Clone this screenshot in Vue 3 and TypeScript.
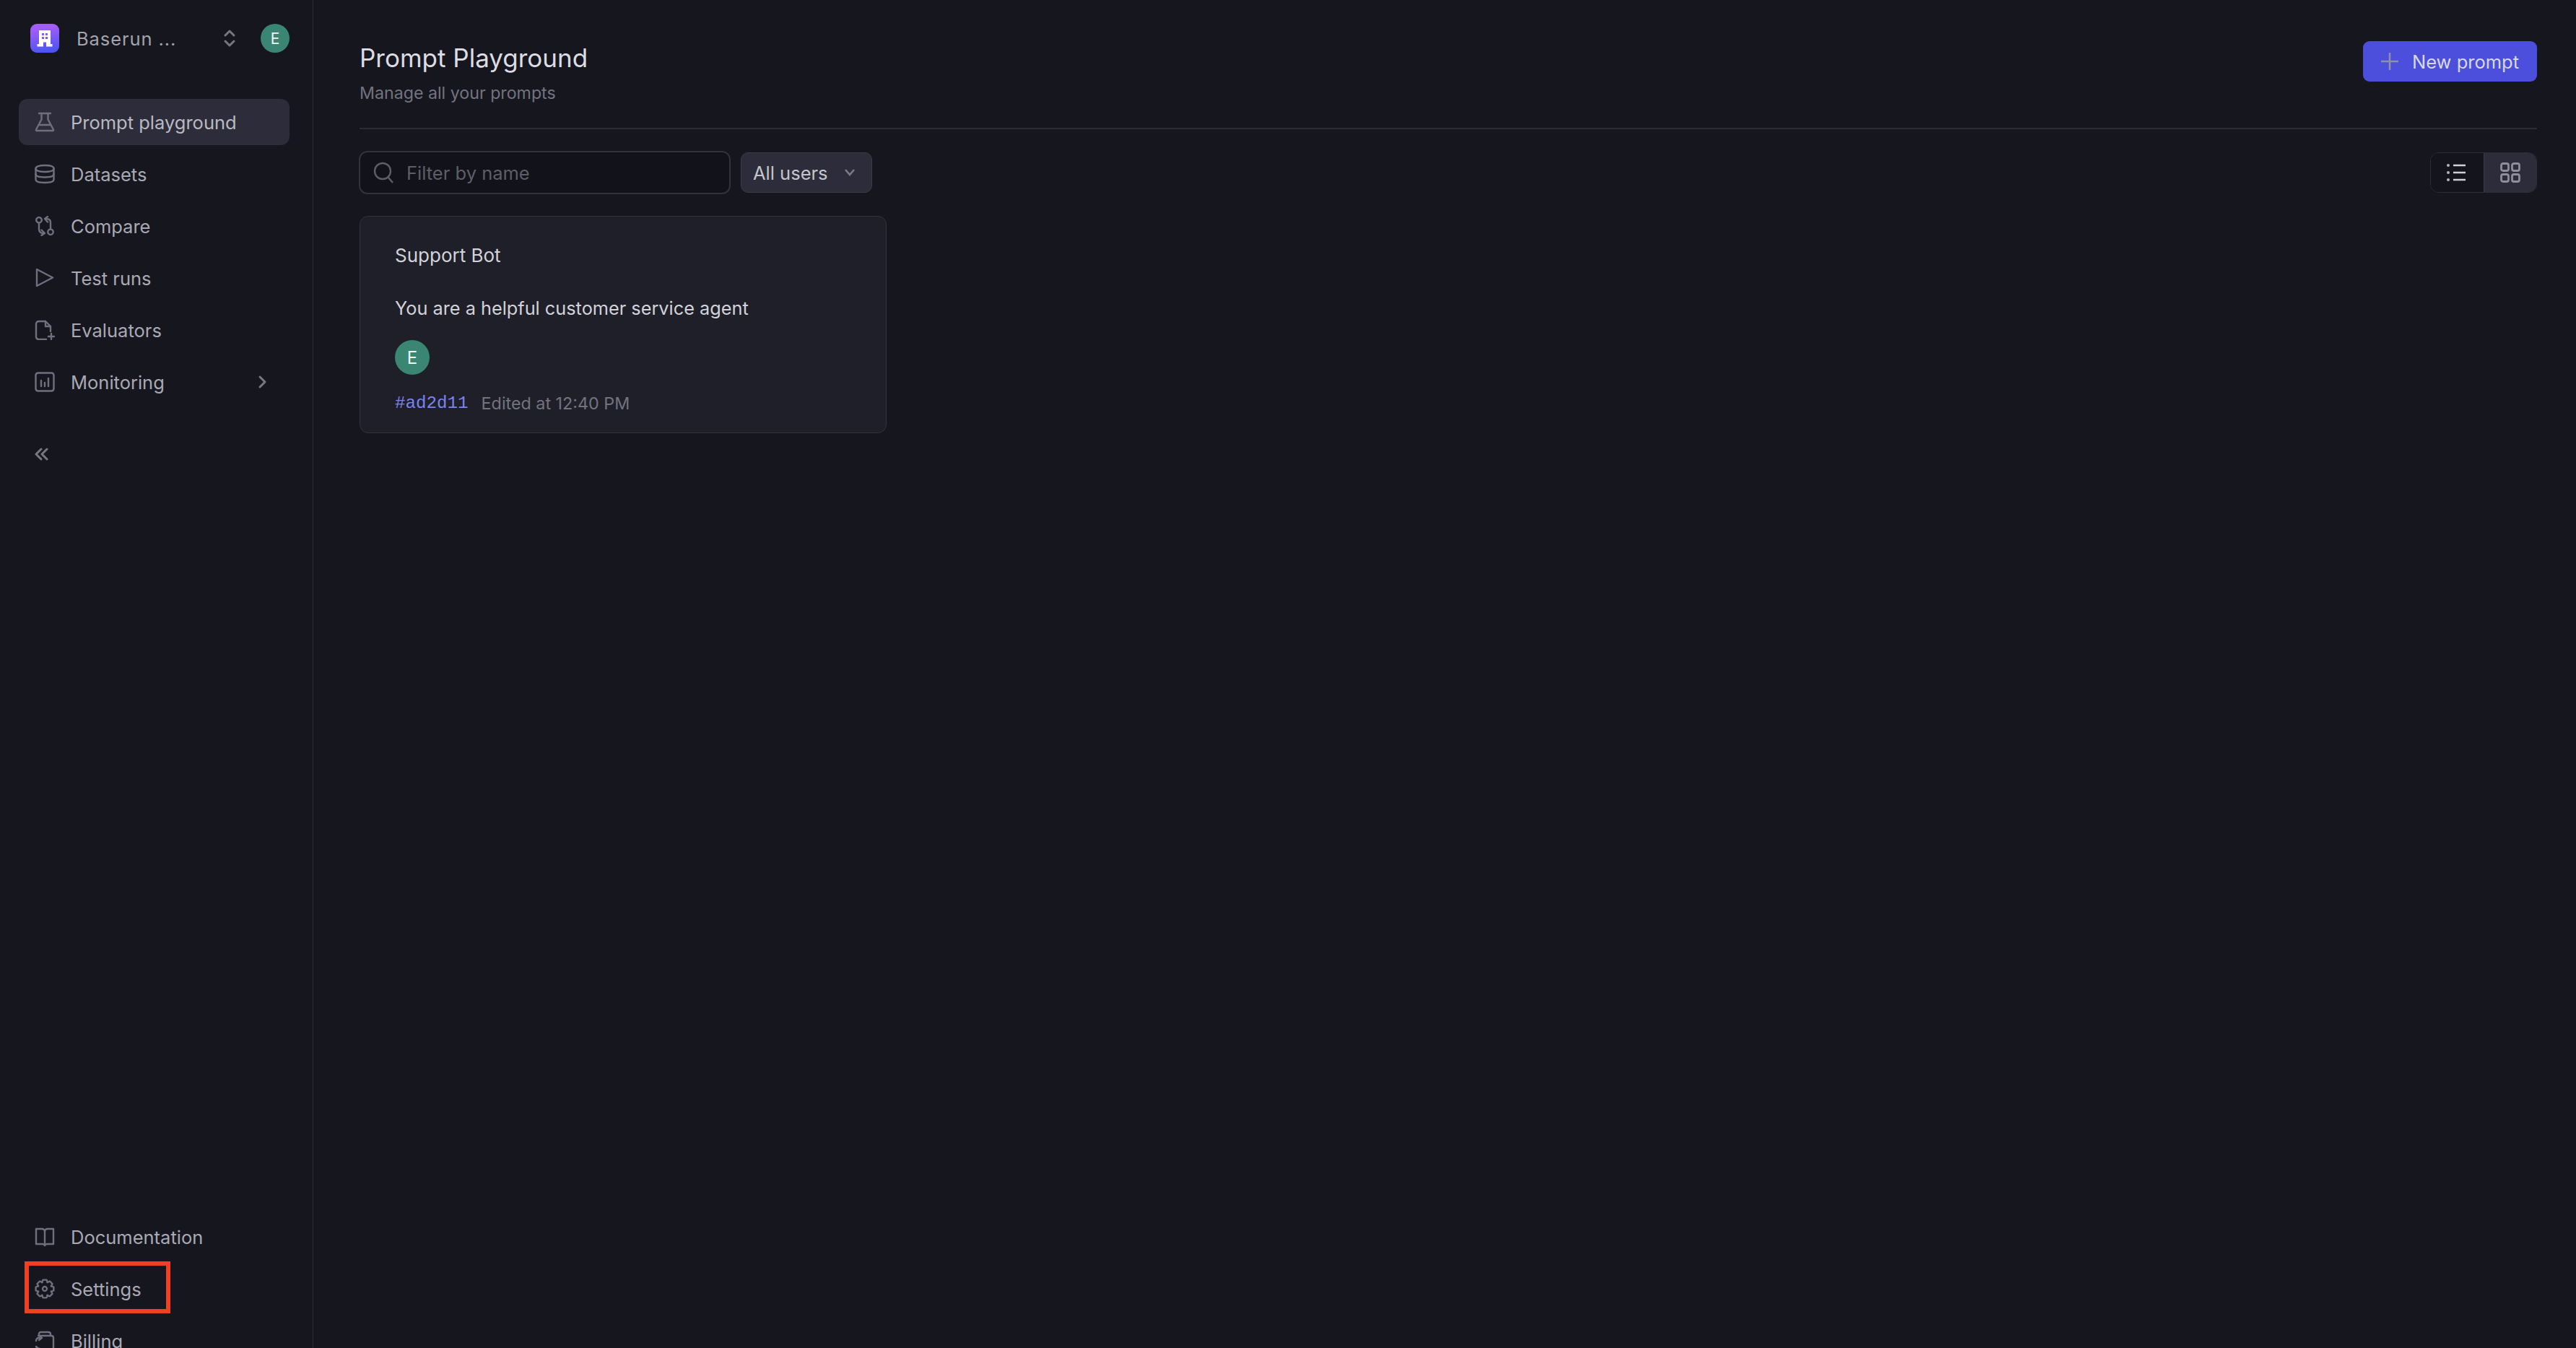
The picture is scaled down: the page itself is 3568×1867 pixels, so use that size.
<script setup lang="ts">
interface NavItem {
  label: string;
  paths: string[];
  active?: boolean;
  chevron?: boolean;
  boxed?: boolean;
}

// 8 tooth gear outline, centred in the 28 box
function gearPath(): string {
  const pts: string[] = [];
  for (let i = 0; i < 8; i++) {
    const a = (i * Math.PI) / 4;
    const corners: [number, number][] = [
      [9.6, -0.42],
      [12.6, -0.2],
      [12.6, 0.2],
      [9.6, 0.42],
    ];
    for (const [r, off] of corners) {
      const x = 14 + r * Math.cos(a + off);
      const y = 14 + r * Math.sin(a + off);
      pts.push(`${x.toFixed(2)} ${y.toFixed(2)}`);
    }
  }
  return `M${pts.join("L")}Z`;
}

const mainNav: NavItem[] = [
  {
    label: "Prompt playground",
    active: true,
    paths: ["M6 2h16", "M9.500 2v8.500L2 24.500q-.5 1.500 1 1.500h22q1.500 0 1-1.500L18.500 10.500V2", "M6.500 18h15"],
  },
  {
    label: "Datasets",
    paths: [
      "M1.500 6.500C1.500 3.500 7 2 14 2s12.500 1.500 12.500 4.500S21 11 14 11 1.500 9.500 1.500 6.500Z",
      "M1.500 6.500v15C1.500 24.500 7 26 14 26s12.500-1.500 12.500-4.500v-15",
      "M1.500 14c0 3 5.500 4.500 12.500 4.500S26.500 17 26.500 14",
    ],
  },
  {
    label: "Compare",
    paths: [
      "M6 2a3.800 3.800 0 1 0 .01 0Z",
      "M22 18.500a3.800 3.800 0 1 0 .01 0Z",
      "M6 9.600V18q0 6 6 6h1",
      "M9.500 19.500 14 24l-4.500 3",
      "M22 18.500V9q0-5-6-5h-1",
      "M18 8.500 14 4l4-3",
    ],
  },
  { label: "Test runs", paths: ["M3 2v23L25 13.500Z"] },
  {
    label: "Evaluators",
    paths: ["M22 16V9l-7-7H6Q2 2 2 6v17q0 4 4 4h10", "M15 2v7h7", "M23 19v8", "M19 23h8"],
  },
  {
    label: "Monitoring",
    chevron: true,
    paths: ["M5 1.500h18q3.500 0 3.500 3.500v18q0 3.500-3.500 3.500H5q-3.500 0-3.500-3.500V5q0-3.500 3.500-3.500Z", "M9 12v8", "M14 15v5", "M19 9v11"],
  },
];

const bottomNav: NavItem[] = [
  {
    label: "Documentation",
    paths: ["M14 7v19", "M14 7q0-4-4-4H2v21h9q2 0 3 2 1-2 3-2h9V3h-8q-4 0-4 4Z"],
  },
  {
    label: "Settings",
    boxed: true,
    paths: ["M14 11a3 3 0 1 0 .01 0Z", gearPath()],
  },
  {
    label: "Billing",
    paths: ["M6 7V5q0-3 3-3h10q3 0 3 3v2", "M5 7h18q3 0 3 3v13q0 3-3 3H8", "M2 14q0-4 4-4h3", "M6 7 10 10 6 13", "M2 22q2 3 5 3"],
  },
];
</script>

<template>
  <div class="page">
    <aside class="sidebar">
      <div class="workspace">
        <span class="logo">
          <svg width="22" height="24" viewBox="0 0 22 24">
            <path
              fill="#fff"
              fill-rule="evenodd"
              d="M3 1h16v19h2.500v3.500H13v-6H9v6H.500V20H3ZM7 5v3h3V5Zm5 0v3h3V5ZM7 10v3h3v-3Zm5 0v3h3v-3Z"
            />
          </svg>
        </span>
        <span class="workspace-name">Baserun ...</span>
        <svg class="updown" width="18" height="26" viewBox="0 0 18 26">
          <path d="M3 9l6-6 6 6M3 17l6 6 6-6" />
        </svg>
        <span class="avatar">E</span>
      </div>

      <nav class="nav">
        <a v-for="item in mainNav" :key="item.label" class="nav-item" :class="{ active: item.active }">
          <svg class="nav-icon" width="28" height="28" viewBox="0 0 28 28">
            <path v-for="d in item.paths" :key="d" :d="d" />
          </svg>
          <span>{{ item.label }}</span>
          <svg v-if="item.chevron" class="chevron" width="14" height="20" viewBox="0 0 14 20">
            <path d="M3 3l7 7-7 7" />
          </svg>
        </a>
      </nav>

      <button class="collapse">
        <svg width="20" height="18" viewBox="0 0 20 18">
          <path d="M9 2 2 9l7 7M17 2l-7 7 7 7" />
        </svg>
      </button>

      <nav class="nav nav-bottom">
        <a v-for="item in bottomNav" :key="item.label" class="nav-item" :class="{ boxed: item.boxed }">
          <svg class="nav-icon" width="28" height="28" viewBox="0 0 28 28">
            <path v-for="d in item.paths" :key="d" :d="d" />
          </svg>
          <span>{{ item.label }}</span>
        </a>
      </nav>
    </aside>

    <main class="main">
      <header class="header">
        <div>
          <h1 class="title">Prompt Playground</h1>
          <p class="subtitle">Manage all your prompts</p>
        </div>
        <button class="new-btn">
          <svg width="26" height="26" viewBox="0 0 26 26">
            <path d="M13 1v24M1 13h24" />
          </svg>
          New prompt
        </button>
      </header>

      <div class="toolbar">
        <label class="search">
          <svg width="30" height="32" viewBox="0 0 30 32">
            <circle cx="13" cy="14" r="11" />
            <path d="M21 23l6 7" />
          </svg>
          <input placeholder="Filter by name" />
        </label>
        <button class="users">
          All users
          <svg width="16" height="12" viewBox="0 0 16 12">
            <path d="M2 2l6 7 6-7" />
          </svg>
        </button>
        <div class="view-toggle">
          <button class="view-btn">
            <svg width="28" height="26" viewBox="0 0 28 26">
              <circle cx="2" cy="3" r="2" />
              <circle cx="2" cy="13" r="2" />
              <circle cx="2" cy="23" r="2" />
              <path d="M9 3h17M9 13h17M9 23h17" />
            </svg>
          </button>
          <button class="view-btn on">
            <svg width="28" height="28" viewBox="0 0 28 28">
              <rect x="1.500" y="1.500" width="10" height="10" rx="2.500" />
              <rect x="16.500" y="1.500" width="10" height="10" rx="2.500" />
              <rect x="1.500" y="16.500" width="10" height="10" rx="2.500" />
              <rect x="16.500" y="16.500" width="10" height="10" rx="2.500" />
            </svg>
          </button>
        </div>
      </div>

      <article class="card">
        <h2 class="card-title">Support Bot</h2>
        <p class="card-text">You are a helpful customer service agent</p>
        <span class="avatar avatar-lg">E</span>
        <div class="card-meta">
          <span class="hash">#ad2d11</span>
          <span>Edited at 12:40 PM</span>
        </div>
      </article>
    </main>
  </div>
</template>

<style>
html,
body {
  margin: 0;
  background: #16161f;
  overflow: hidden;
}
</style>

<style scoped>
.page {
  display: flex;
  height: 1867px;
  overflow: hidden;
  background: #16161f;
  font-family: Inter, "Liberation Sans", sans-serif;
  color: #a9a9b4;
}

.sidebar {
  box-sizing: border-box;
  flex: none;
  width: 434px;
  height: 1889px;
  padding: 33px 32px 0 26px;
  display: flex;
  flex-direction: column;
  border-right: 1px solid #2a2a34;
}

.workspace {
  display: flex;
  align-items: center;
  height: 40px;
  padding-left: 16px;
  font-size: 25.500px;
}

.logo {
  flex: none;
  width: 40px;
  height: 40px;
  border-radius: 9px;
  display: flex;
  align-items: center;
  justify-content: center;
  background: linear-gradient(170deg, #a25cf8 20%, #4c55f2 90%);
}

.workspace-name {
  margin-left: 24px;
  flex: 1;
  letter-spacing: 0.900px;
  color: #a3a3ad;
}

.updown {
  margin-right: 34px;
}

.updown path,
.chevron path {
  fill: none;
  stroke: #77777f;
  stroke-width: 3;
  stroke-linecap: round;
  stroke-linejoin: round;
}

.avatar {
  flex: none;
  width: 40px;
  height: 40px;
  border-radius: 50%;
  display: flex;
  align-items: center;
  justify-content: center;
  background: #3b8673;
  color: #f2f5f4;
  font-size: 21px;
}

.nav {
  display: flex;
  flex-direction: column;
  gap: 8px;
}

.sidebar > .nav:first-of-type {
  margin-top: 64px;
}

.nav-item {
  position: relative;
  height: 64px;
  padding-left: 22px;
  display: flex;
  align-items: center;
  gap: 22px;
  border-radius: 12px;
  font-size: 25.500px;
  color: #a9a9b4;
}

.nav-item.active {
  background: #2c2c3a;
  color: #b9b9c2;
}

.nav-icon path {
  fill: none;
  stroke: #6f6f80;
  stroke-width: 2.400;
  stroke-linecap: round;
  stroke-linejoin: round;
}

.chevron {
  position: absolute;
  right: 30px;
  top: 22px;
}

.nav-item.boxed::after {
  content: "";
  position: absolute;
  left: 8px;
  top: -6px;
  width: 202px;
  height: 72px;
  box-sizing: border-box;
  border: 6px solid #ef4023;
}

.collapse {
  align-self: flex-start;
  margin: 59px 0 0 22px;
  padding: 0;
  height: 20px;
  display: flex;
  background: none;
  border: none;
}

.collapse path {
  fill: none;
  stroke: #77777f;
  stroke-width: 3;
  stroke-linecap: round;
  stroke-linejoin: round;
}

.nav-bottom {
  margin-top: auto;
}

.main {
  box-sizing: border-box;
  flex: 1;
  min-width: 0;
  padding: 57px 54px 0 64px;
}

.header {
  height: 122px;
  box-sizing: border-box;
  display: flex;
  justify-content: space-between;
  align-items: flex-start;
  border-bottom: 2px solid #2a2a34;
}

.title {
  margin: 0;
  font-size: 35px;
  line-height: 46px;
  font-weight: 400;
  color: #dcdce2;
}

.subtitle {
  margin: 10px 0 0;
  font-size: 23.200px;
  line-height: 32px;
  color: #73737f;
}

.new-btn {
  box-sizing: border-box;
  width: 241px;
  height: 56px;
  padding: 0 0 0 24px;
  display: flex;
  align-items: center;
  gap: 18px;
  background: #4c4fdc;
  border: none;
  border-radius: 9px;
  font: inherit;
  font-size: 25.500px;
  color: #d8d8e2;
}

.new-btn path {
  stroke: #8f8fa8;
  stroke-width: 2.500;
  fill: none;
}

.toolbar {
  margin-top: 30px;
  display: flex;
  align-items: center;
  gap: 14px;
}

.search {
  box-sizing: border-box;
  width: 515px;
  height: 60px;
  margin-left: -1px;
  padding: 0 12px 0 18px;
  display: flex;
  align-items: center;
  gap: 16px;
  background: #12121a;
  border: 2px solid #32323d;
  border-radius: 12px;
}

.search svg {
  flex: none;
  fill: none;
  stroke: #5e5e66;
  stroke-width: 2.400;
}

.search input {
  flex: 1;
  min-width: 0;
  background: none;
  border: none;
  outline: none;
  padding: 0;
  font: inherit;
  font-size: 25.500px;
  color: #a9a9b4;
}

.search input::placeholder {
  color: #5e5e66;
  opacity: 1;
}

.users {
  box-sizing: border-box;
  width: 182px;
  height: 56px;
  padding: 0 22px 0 16px;
  display: flex;
  align-items: center;
  justify-content: space-between;
  background: #2c2c3a;
  border: 1px solid #3a3a47;
  border-radius: 10px;
  font: inherit;
  font-size: 25.500px;
  color: #c4c4cc;
}

.users path {
  fill: none;
  stroke: #7b7b87;
  stroke-width: 2.600;
}

.view-toggle {
  margin-left: auto;
  width: 148px;
  height: 56px;
  box-sizing: border-box;
  display: flex;
  border: 1px solid #2d2d38;
  border-radius: 12px;
  overflow: hidden;
}

.view-btn {
  flex: 1;
  padding: 0;
  display: flex;
  align-items: center;
  justify-content: center;
  background: #14141c;
  border: none;
}

.view-btn svg {
  fill: #b5b5bf;
}

.view-btn path {
  fill: none;
  stroke: #cfcfd6;
  stroke-width: 2.500;
}

.view-btn.on {
  background: #2c2c3a;
  border-left: 1px solid #3a3a47;
}

.view-btn.on rect {
  fill: none;
  stroke: #8e8e9c;
  stroke-width: 2.800;
}

.card {
  box-sizing: border-box;
  width: 730px;
  height: 301px;
  margin-top: 30px;
  padding: 37px 48px 0;
  background: #1f1f29;
  border: 1px solid #33333f;
  border-radius: 12px;
}

.card-title {
  margin: 0;
  font-size: 26px;
  line-height: 34px;
  font-weight: 400;
  color: #d2d2d9;
}

.card-text {
  margin: 39px 0 0;
  font-size: 25.300px;
  line-height: 34px;
  color: #d2d2d9;
}

.avatar-lg {
  margin-top: 27px;
  width: 48px;
  height: 48px;
  font-size: 24px;
}

.card-meta {
  margin-top: 24px;
  display: flex;
  align-items: center;
  gap: 18px;
  font-size: 23.300px;
  line-height: 32px;
  color: #73737f;
}

.hash {
  font-family: "Liberation Mono", monospace;
  font-size: 24.200px;
  color: #7b83f0;
}
</style>
